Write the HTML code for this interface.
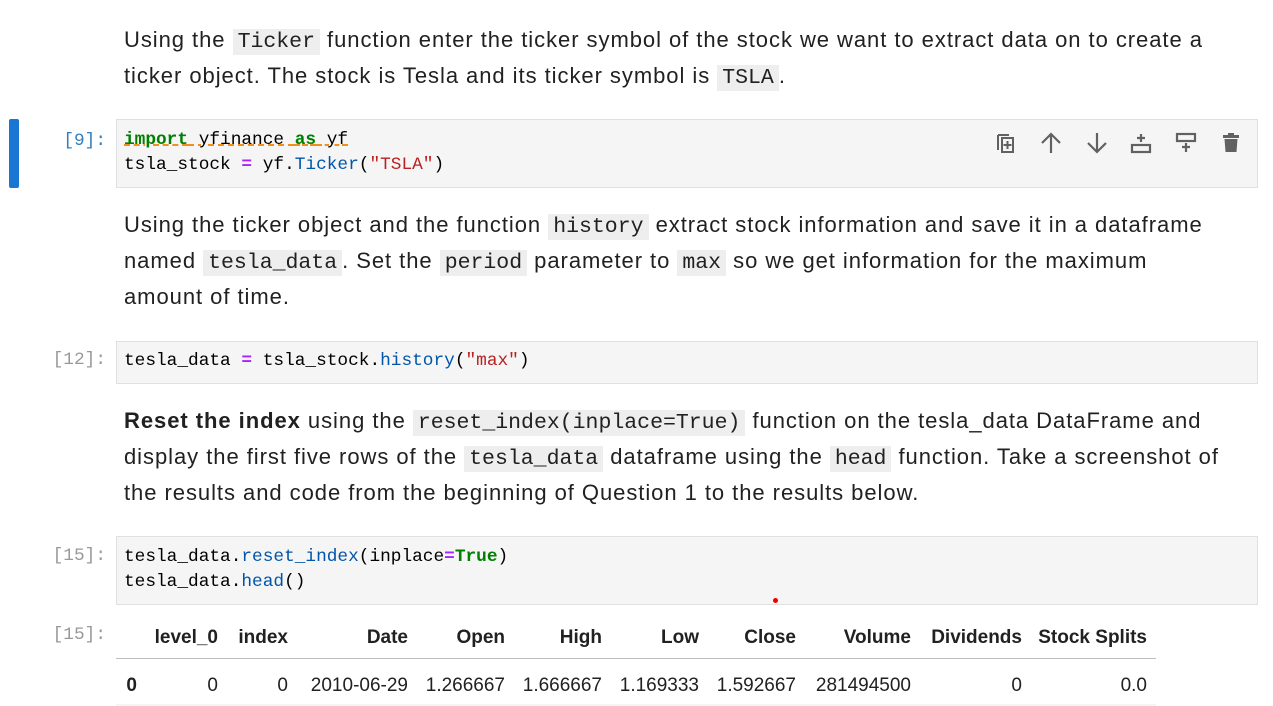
<!DOCTYPE html>
<html><head><style>
body{margin:0;width:1273px;height:706px;background:#fff;position:relative;overflow:hidden;font-family:"Liberation Sans",sans-serif;color:#212121}
.l{position:absolute;left:124px;font-size:22px;letter-spacing:0.95px;white-space:nowrap;line-height:36px}
.c{font-family:"Liberation Mono",monospace;background:#eee;padding:1px 5px;font-size:21.5px;letter-spacing:0}
.cell{position:absolute;left:116px;width:1140px;background:#f5f5f5;border:1px solid #e0e0e0}
.code{position:absolute;left:124px;font-family:"Liberation Mono",monospace;font-size:17.8px;line-height:25px;white-space:pre;color:#000}
.p{position:absolute;right:1167px;font-family:"Liberation Mono",monospace;font-size:17.8px;color:#999}
.k{color:#008000;font-weight:bold}.o{color:#aa22ff;font-weight:bold}.s{color:#ba2121}.f{color:#0055aa}
.t{position:absolute;font-size:19px;white-space:nowrap;transform:translateX(-100%)}
.h{font-weight:bold;top:627px}.r{top:675px}
.ic{position:absolute;top:131px}
</style></head><body>
<div class="l" style="top:22px">Using the <span class="c">Ticker</span> function enter the ticker symbol of the stock we want to extract data on to create a</div>
<div class="l" style="top:58px">ticker object. The stock is Tesla and its ticker symbol is <span class="c">TSLA</span>.</div>

<div style="position:absolute;left:9px;top:119px;width:10px;height:69px;background:#1976d2;border-radius:2px"></div>
<div class="p" style="top:131px;color:#307fc1">[9]:</div>
<div class="cell" style="top:119px;height:67px"></div>
<div class="code" style="top:128px"><span class="k" style="text-decoration:underline dashed #f08000">import</span><span style="text-decoration:underline dashed #f08000"> yfinance </span><span class="k" style="text-decoration:underline dashed #f08000">as</span><span style="text-decoration:underline dashed #f08000"> yf</span>
tsla_stock <span class="o">=</span> yf.<span class="f">Ticker</span>(<span class="s">"TSLA"</span>)</div>
<svg class="ic" style="left:995px" width="22" height="24" viewBox="0 0 22 24" fill="none" stroke="#616161" stroke-width="2"><path d="M3 4v15M3 4h11"/><rect x="7" y="7" width="11" height="14"/><path d="M12.5 10v8M8.5 14h8"/></svg>
<svg class="ic" style="left:1039px" width="24" height="24" viewBox="0 0 24 24" fill="none" stroke="#616161" stroke-width="2.2"><path d="M12 22V3M3 12l9-9 9 9"/></svg>
<svg class="ic" style="left:1085px" width="24" height="24" viewBox="0 0 24 24" fill="none" stroke="#616161" stroke-width="2.2"><path d="M12 2v19M3 12l9 9 9-9"/></svg>
<svg class="ic" style="left:1129px" width="24" height="24" viewBox="0 0 24 24" fill="none" stroke="#616161" stroke-width="2.2"><rect x="3" y="14" width="18" height="7"/><path d="M12 3v8M8 7h8"/></svg>
<svg class="ic" style="left:1174px" width="24" height="24" viewBox="0 0 24 24" fill="none" stroke="#616161" stroke-width="2.2"><rect x="3" y="3" width="18" height="7"/><path d="M12 12v9M8 16h8"/></svg>
<svg class="ic" style="left:1221px" width="20" height="24" viewBox="0 0 20 24" fill="#616161"><rect x="2" y="4" width="16" height="3"/><rect x="7" y="2" width="6" height="3"/><path d="M3.5 8h13l-1 13h-11z"/></svg>

<div class="l" style="top:207px">Using the ticker object and the function <span class="c">history</span> extract stock information and save it in a dataframe</div>
<div class="l" style="top:243px">named <span class="c">tesla_data</span>. Set the <span class="c">period</span> parameter to <span class="c">max</span> so we get information for the maximum</div>
<div class="l" style="top:279px">amount of time.</div>

<div class="p" style="top:350px">[12]:</div>
<div class="cell" style="top:341px;height:41px"></div>
<div class="code" style="top:349px">tesla_data <span class="o">=</span> tsla_stock.<span class="f">history</span>(<span class="s">"max"</span>)</div>

<div class="l" style="top:403px"><b>Reset the index</b> using the <span class="c">reset_index(inplace=True)</span> function on the tesla_data DataFrame and</div>
<div class="l" style="top:439px">display the first five rows of the <span class="c">tesla_data</span> dataframe using the <span class="c">head</span> function. Take a screenshot of</div>
<div class="l" style="top:475px">the results and code from the beginning of Question 1 to the results below.</div>

<div class="p" style="top:546px">[15]:</div>
<div class="cell" style="top:536px;height:67px"></div>
<div class="code" style="top:545px">tesla_data.<span class="f">reset_index</span>(inplace<span class="o">=</span><span class="k">True</span>)
tesla_data.<span class="f">head</span>()</div>
<div style="position:absolute;left:773px;top:598px;width:5px;height:5px;border-radius:50%;background:#e00"></div>

<div class="p" style="top:625px">[15]:</div>
<div class="t h" style="left:218px">level_0</div><div class="t h" style="left:288px">index</div><div class="t h" style="left:408px">Date</div><div class="t h" style="left:505px">Open</div><div class="t h" style="left:602px">High</div><div class="t h" style="left:699px">Low</div><div class="t h" style="left:796px">Close</div><div class="t h" style="left:911px">Volume</div><div class="t h" style="left:1022px">Dividends</div><div class="t h" style="left:1147px">Stock Splits</div>
<div style="position:absolute;left:116px;top:658px;width:1040px;height:1px;background:#bdbdbd"></div>
<div class="t r" style="left:137px;font-weight:bold">0</div><div class="t r" style="left:218px">0</div><div class="t r" style="left:288px">0</div><div class="t r" style="left:408px">2010-06-29</div><div class="t r" style="left:505px">1.266667</div><div class="t r" style="left:602px">1.666667</div><div class="t r" style="left:699px">1.169333</div><div class="t r" style="left:796px">1.592667</div><div class="t r" style="left:911px">281494500</div><div class="t r" style="left:1022px">0</div><div class="t r" style="left:1147px">0.0</div>
<div style="position:absolute;left:116px;top:704px;width:1040px;height:2px;background:#f5f5f5"></div>
</body></html>
